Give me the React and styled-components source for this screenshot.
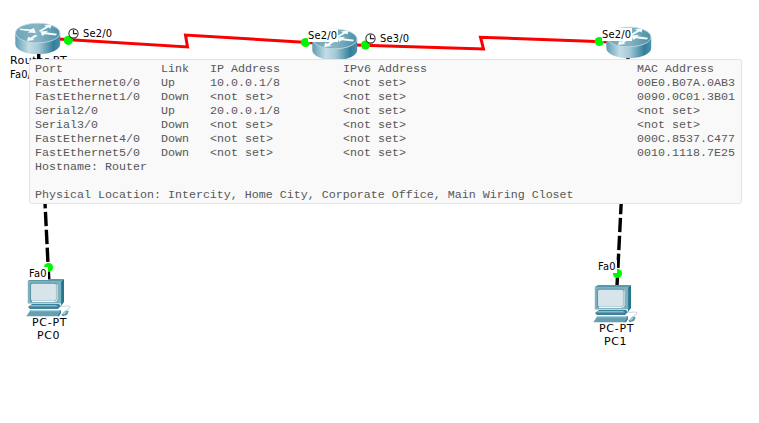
import React from 'react';
import styled, { createGlobalStyle } from 'styled-components';

const GlobalStyle = createGlobalStyle`
  body { margin: 0; background: #fff; }
`;

const Workspace = styled.main`
  position: relative;
  width: 759px;
  height: 423px;
  overflow: hidden;
  background: #fff;
`;

const Cables = styled.svg`
  position: absolute;
  inset: 0;
  width: 759px;
  height: 423px;
`;

const Device = styled.svg`
  position: absolute;
  left: ${(p) => p.$x}px;
  top: ${(p) => p.$y}px;
  overflow: visible;
`;

const Label = styled.span`
  position: absolute;
  left: ${(p) => p.$x}px;
  top: ${(p) => p.$y}px;
  box-sizing: border-box;
  height: 13px;
  padding: ${(p) => (p.$filled ? '0 1px 0 0' : '0')};
  line-height: 13px;
  font-family: ${(p) => (p.$wide ? "'DejaVu Sans'" : "'DejaVu Sans Condensed', 'DejaVu Sans'")}, sans-serif;
  font-stretch: ${(p) => (p.$wide ? 'normal' : 'condensed')};
  font-size: 11px;
  letter-spacing: ${(p) => p.$spacing}px;
  color: #000;
  white-space: nowrap;
  background: ${(p) => (p.$filled ? '#fff' : 'transparent')};
`;

const PortTooltip = styled.section`
  position: absolute;
  left: 29px;
  top: 59px;
  box-sizing: border-box;
  width: 713px;
  height: 145px;
  padding: 2px 5px;
  border: 1px solid #e3e3e3;
  border-radius: 3px;
  background: #f9f9f9;
  color: #575757;
  font-family: 'Liberation Mono', monospace;
  font-size: 11.665px;
  line-height: 14px;
  white-space: pre;
`;

const PortRow = styled.div`
  display: grid;
  grid-template-columns: 126px 49px 133px 294px 1fr;
  height: 14px;
`;

const InfoLine = styled.div`
  height: 14px;
`;

const ports = [
  ['Port', 'Link', 'IP Address', 'IPv6 Address', 'MAC Address'],
  ['FastEthernet0/0', 'Up', '10.0.0.1/8', '<not set>', '00E0.B07A.0AB3'],
  ['FastEthernet1/0', 'Down', '<not set>', '<not set>', '0090.0C01.3B01'],
  ['Serial2/0', 'Up', '20.0.0.1/8', '<not set>', '<not set>'],
  ['Serial3/0', 'Down', '<not set>', '<not set>', '<not set>'],
  ['FastEthernet4/0', 'Down', '<not set>', '<not set>', '000C.8537.C477'],
  ['FastEthernet5/0', 'Down', '<not set>', '<not set>', '0010.1118.7E25'],
];

const routers = [
  { id: 'r0', x: 15, y: 23 },
  { id: 'r1', x: 312, y: 29 },
  { id: 'r2', x: 606, y: 27 },
];

const pcs = [
  { id: 'pc0', x: 26, y: 279 },
  { id: 'pc1', x: 593, y: 285 },
];

const labels = [
  { text: 'Se2/0', x: 83, y: 27, spacing: 0.2 },
  { text: 'Se2/0', x: 308, y: 29, spacing: 0.2, filled: true },
  { text: 'Se3/0', x: 380, y: 32, spacing: 0.2 },
  { text: 'Se2/0', x: 602, y: 28, spacing: 0.2, filled: true },
  { text: 'Router-PT', x: 10, y: 54, spacing: 0.45, wide: true },
  { text: 'Fa0/0', x: 10, y: 68, spacing: 0.2 },
  { text: 'Fa0', x: 29, y: 267, spacing: 0.2, filled: true },
  { text: 'PC-PT', x: 32, y: 316, spacing: 0.7, wide: true },
  { text: 'PC0', x: 37, y: 329, spacing: 0.6, wide: true },
  { text: 'Fa0', x: 598, y: 260, spacing: 0.2, filled: true },
  { text: 'PC-PT', x: 599, y: 322, spacing: 0.7, wide: true },
  { text: 'PC1', x: 604, y: 335, spacing: 0.6, wide: true },
];

function Router({ id, x, y }) {
  return (
    <Device $x={x} $y={y} width="46" height="32" viewBox="0 0 46 32">
      <defs>
        <linearGradient id={`${id}-side`}>
          <stop offset="0" stopColor="#5d9db3" />
          <stop offset="0.3" stopColor="#c4dde6" />
          <stop offset="0.52" stopColor="#a3c9d6" />
          <stop offset="0.85" stopColor="#327f9b" />
          <stop offset="1" stopColor="#4b91a9" />
        </linearGradient>
        <linearGradient id={`${id}-top`}>
          <stop offset="0" stopColor="#6fa5b7" />
          <stop offset="0.5" stopColor="#86b5c4" />
          <stop offset="1" stopColor="#4a8fa7" />
        </linearGradient>
      </defs>
      <path d="M.3 10v11C.3 27 10 31.2 22.7 31.2S45.2 27 45.2 21V10z" fill={`url(#${id}-side)`} />
      <ellipse cx="22.7" cy="10" rx="22.2" ry="9.8" fill={`url(#${id}-top)`} stroke="#bdd8e1" strokeWidth="0.9" />
      <g fill="#f6fbfc">
        <path d="M5 5.4L15.5 6.6L19 5L20.8 10L12.5 9.4L15 8.2L4.8 7z" />
        <path d="M23.5 8L31 3.6L28.5 2.6L36.5 1.6L35.5 5.4L33.3 4.5L25.8 8.8z" />
        <path d="M42 10.8L31 9.2L33.5 7.8L25.5 8.4L27 13L30 11.2L41 12.6z" />
        <path d="M20.2 11.8L15.3 14.8L13.2 13.8L12 18L20 17.1L17.6 15.9L22.5 12.8z" />
      </g>
    </Device>
  );
}

function Computer({ x, y }) {
  return (
    <Device $x={x} $y={y} width="46" height="38" viewBox="0 0 46 38">
      <path d="M35.5 27.5c4-.3 8-1.3 8.4.2s-2.5 2-3.3 4.3" fill="none" stroke="#c5dbe2" strokeWidth="1.1" />
      <path d="M35 2l3-2v23l-3 4z" fill="#24768f" />
      <path d="M1.8 2L5 0h33l-3 2z" fill="#5799ac" />
      <path d="M1.8 2h33.4v22.5H1.8z" fill="#80afbd" />
      <rect x="4.5" y="4.3" width="26" height="18" rx="2" fill="#d7e5eb" stroke="#5b98aa" strokeWidth="1.1" />
      <path d="M31 5.5v15q0 2-2.5 2H6" fill="none" stroke="#f2f9fb" strokeWidth="1" />
      <path d="M6 25h27l2 2-3 3H4l-2-2z" fill="#3a819a" />
      <path d="M5 26h25l2 1.5H4z" fill="#8fb8c5" />
      <path d="M4.5 31H35l-4 6.2H.3z" fill="#65a0b2" />
      <path d="M5 31h29l-.8 1.2H4z" fill="#a8cbd5" />
      <path d="M31 37.2l4-6.2v3l-2 3.2z" fill="#28758f" />
      <path d="M39.5 31.5l3.3.8-1.8 3.8-4.3 1.1-1.2-1.4z" fill="#5597ab" />
      <path d="M39 32.3l2 .3-2.6 2.8-1.7-.2z" fill="#b1d0d9" />
    </Device>
  );
}

function Clock({ x, y }) {
  return (
    <Device $x={x} $y={y} width="12" height="12" viewBox="0 0 12 12">
      <circle cx="5.5" cy="5.5" r="4.6" fill="#fff" stroke="#333" strokeWidth="1.1" />
      <path d="M5.5 2v3.7H9" fill="none" stroke="#222" strokeWidth="1.2" />
    </Device>
  );
}

export default function App() {
  return (
    <>
      <GlobalStyle />
      <Workspace>
        <Cables viewBox="0 0 759 423">
          <g fill="none" stroke="#fa0000" strokeWidth="3">
            <path d="M58 39L187.5 47L185.5 35L316 43" />
            <path d="M355 45L483.5 49L480.5 37.2L610 42" />
          </g>
          <g fill="none" stroke="#000" strokeWidth="3.4">
            <path d="M45 203L48.8 280" strokeDasharray="14.3 3.6" strokeDashoffset="9" />
            <path d="M621.2 203L617 286" strokeDasharray="14.3 3.6" strokeDashoffset="3" />
            <path d="M628 56V61" />
          </g>
        </Cables>
        {routers.map((r) => <Router key={r.id} {...r} />)}
        {pcs.map((pc) => <Computer key={pc.id} x={pc.x} y={pc.y} />)}
        <Cables viewBox="0 0 759 423">
          <path d="M38.7 54V62" stroke="#000" strokeWidth="3.4" />
          <g fill="#00f500">
            <circle cx="68.3" cy="40.3" r="4.6" />
            <circle cx="305.5" cy="42.5" r="4.6" />
            <circle cx="365.5" cy="45" r="4.6" />
            <circle cx="599.3" cy="41.5" r="4.6" />
            <circle cx="48.5" cy="267.5" r="4.6" />
            <circle cx="617.5" cy="273.5" r="4.6" />
          </g>
        </Cables>
        <Clock x={68} y={28} />
        <Clock x={365} y={33} />
        {labels.map((l) => (
          <Label key={`${l.x}-${l.y}`} $x={l.x} $y={l.y} $spacing={l.spacing} $filled={l.filled} $wide={l.wide}>
            {l.text}
          </Label>
        ))}
        <PortTooltip>
          {ports.map((row) => (
            <PortRow key={row[0]}>
              {row.map((cell, i) => <span key={i}>{cell}</span>)}
            </PortRow>
          ))}
          <InfoLine>Hostname: Router</InfoLine>
          <InfoLine />
          <InfoLine>Physical Location: Intercity, Home City, Corporate Office, Main Wiring Closet</InfoLine>
        </PortTooltip>
      </Workspace>
    </>
  );
}
